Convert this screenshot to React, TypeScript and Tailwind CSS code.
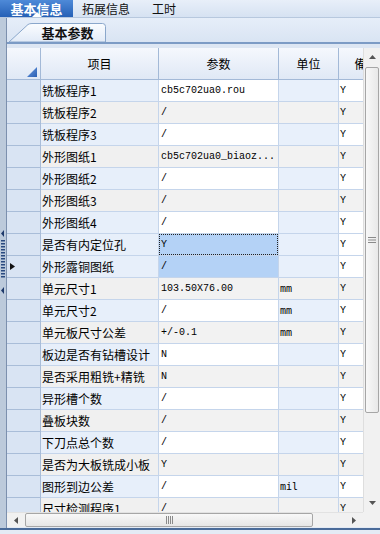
import React from "react";

type RowData = {
  name: string;
  val: string;
  unit?: string;
  sel?: boolean;
  focus?: boolean;
  marker?: boolean;
};

const rows: RowData[] = [
  { name: "铣板程序1", val: "cb5c702ua0.rou" },
  { name: "铣板程序2", val: "/" },
  { name: "铣板程序3", val: "/" },
  { name: "外形图纸1", val: "cb5c702ua0_biaoz..." },
  { name: "外形图纸2", val: "/" },
  { name: "外形图纸3", val: "/" },
  { name: "外形图纸4", val: "/" },
  { name: "是否有内定位孔", val: "Y", sel: true, focus: true },
  { name: "外形露铜图纸", val: "/", sel: true, marker: true },
  { name: "单元尺寸1", val: "103.50X76.00", unit: "mm" },
  { name: "单元尺寸2", val: "/", unit: "mm" },
  { name: "单元板尺寸公差", val: "+/-0.1", unit: "mm" },
  { name: "板边是否有钻槽设计", val: "N" },
  { name: "是否采用粗铣+精铣", val: "N" },
  { name: "异形槽个数", val: "/" },
  { name: "叠板块数", val: "/" },
  { name: "下刀点总个数", val: "/" },
  { name: "是否为大板铣成小板", val: "Y" },
  { name: "图形到边公差", val: "/", unit: "mil" },
  { name: "尺寸检测程序1", val: "/" },
];

function GridRow({ r, i }: { r: RowData; i: number }) {
  const even = i % 2 === 1;
  const nameBg = even && !r.sel ? "bg-[#f0f0f0]" : "bg-[#e7effa]";
  const valBg = r.sel ? "bg-[#b4d2f6]" : even ? "bg-[#f2f2f2]" : "bg-white";
  const unitBg = even && !r.sel ? "bg-[#f2f2f2]" : "bg-[#e8f0fb]";
  const lastBg = even && !r.sel ? "bg-[#f2f2f2]" : "bg-white";
  return (
    <div className="flex h-[22px] shrink-0">
      <div className="w-[34px] shrink-0 border-r border-b border-[#a9bdd8] bg-[#d9e4f3] flex items-center pl-[3px]">
        {r.marker && (
          <svg width="5" height="7" viewBox="0 0 5 7">
            <path d="M0 0 L5 3.5 L0 7 Z" fill="#111" />
          </svg>
        )}
      </div>
      <div
        className={`w-[118px] shrink-0 border-r border-b border-[#c5d5eb] ${nameBg} flex items-center pl-[1px] text-[12px] text-[#000] whitespace-nowrap overflow-hidden`}
      >
        {r.name}
      </div>
      <div className={`w-[120px] shrink-0 border-r border-b border-[#c5d5eb] ${valBg} flex`}>
        {r.focus ? (
          <div className="flex-1 border border-dotted border-[#222] flex items-center pl-[1px] text-[10px] text-[#000] [font-family:'Liberation_Mono',monospace] whitespace-nowrap overflow-hidden">
            {r.val}
          </div>
        ) : (
          <div className="flex-1 flex items-center pl-[2px] text-[10px] text-[#000] [font-family:'Liberation_Mono',monospace] whitespace-nowrap overflow-hidden">
            {r.val}
          </div>
        )}
      </div>
      <div
        className={`w-[60px] shrink-0 border-r border-b border-[#c5d5eb] ${unitBg} flex items-center pl-[1px] text-[10px] text-[#000] [font-family:'DejaVu_Sans_Mono',monospace]`}
      >
        {r.unit ?? ""}
      </div>
      <div
        className={`w-[56px] shrink-0 border-r border-b border-[#c5d5eb] ${lastBg} flex items-center pl-[1px] text-[10px] text-[#000] [font-family:'Liberation_Mono',monospace]`}
      >
        Y
      </div>
    </div>
  );
}

function HeaderRow() {
  return (
    <div className="flex h-[32px] shrink-0 bg-gradient-to-b from-[#f5f8fd] to-[#dfe8f5] text-[12px] text-[#000]">
      <div className="w-[34px] shrink-0 border-r border-b border-[#a3b9d7] flex items-end justify-end pr-[3px] pb-[2px]">
        <svg width="10" height="10" viewBox="0 0 10 10">
          <defs>
            <linearGradient id="tri" x1="0" y1="0" x2="1" y2="1">
              <stop offset="0" stopColor="#6b9be0" />
              <stop offset="1" stopColor="#2a5fb4" />
            </linearGradient>
          </defs>
          <path d="M10 0 L10 10 L0 10 Z" fill="url(#tri)" />
        </svg>
      </div>
      <div className="w-[118px] shrink-0 border-r border-b border-[#a3b9d7] flex items-center justify-center">
        项目
      </div>
      <div className="w-[120px] shrink-0 border-r border-b border-[#a3b9d7] flex items-center justify-center">
        参数
      </div>
      <div className="w-[60px] shrink-0 border-r border-b border-[#a3b9d7] flex items-center justify-center">
        单位
      </div>
      <div className="w-[56px] shrink-0 border-r border-b border-[#a3b9d7] flex items-center justify-center whitespace-nowrap">
        備注
      </div>
    </div>
  );
}

function VScroll() {
  return (
    <div className="w-[17px] shrink-0 flex flex-col bg-[#f1f1f1] border-l border-[#dedede]">
      <div className="h-[18px] shrink-0 flex items-center justify-center">
        <svg width="7" height="4" viewBox="0 0 7 4">
          <path d="M0 4 L3.5 0 L7 4 Z" fill="#555" />
        </svg>
      </div>
      <div className="h-[346px] shrink-0 mt-[1px] mx-[1px] rounded-[2px] border border-[#a6a6a6] bg-gradient-to-r from-[#f8f8f8] to-[#e8e8e8] flex items-center justify-center">
        <svg width="8" height="6" viewBox="0 0 8 6">
          <rect x="0" y="0" width="8" height="1" fill="#8a8a8a" />
          <rect x="0" y="2.5" width="8" height="1" fill="#8a8a8a" />
          <rect x="0" y="5" width="8" height="1" fill="#8a8a8a" />
        </svg>
      </div>
      <div className="flex-1" />
      <div className="h-[18px] shrink-0 flex items-center justify-center">
        <svg width="7" height="4" viewBox="0 0 7 4">
          <path d="M0 0 L3.5 4 L7 0 Z" fill="#555" />
        </svg>
      </div>
    </div>
  );
}

function HScroll() {
  return (
    <div className="flex h-[15px] shrink-0">
      <div className="w-[356px] shrink-0 flex bg-[#f1f1f1] border-t border-[#e2e2e2]">
        <div className="w-[18px] shrink-0 flex items-center justify-center">
          <svg width="4" height="7" viewBox="0 0 4 7">
            <path d="M4 0 L0 3.5 L4 7 Z" fill="#555" />
          </svg>
        </div>
        <div className="w-[288px] shrink-0 rounded-[2px] border border-[#a6a6a6] bg-gradient-to-b from-[#f8f8f8] to-[#e6e6e6] flex items-center justify-center">
          <svg width="7" height="8" viewBox="0 0 7 8">
            <rect x="0" y="0" width="1" height="8" fill="#8a8a8a" />
            <rect x="2" y="0" width="1" height="8" fill="#8a8a8a" />
            <rect x="4" y="0" width="1" height="8" fill="#8a8a8a" />
            <rect x="6" y="0" width="1" height="8" fill="#8a8a8a" />
          </svg>
        </div>
        <div className="flex-1" />
        <div className="w-[18px] shrink-0 flex items-center justify-center">
          <svg width="4" height="7" viewBox="0 0 4 7">
            <path d="M0 0 L4 3.5 L0 7 Z" fill="#555" />
          </svg>
        </div>
      </div>
      <div className="w-[17px] shrink-0 bg-[#f1f1f1]" />
    </div>
  );
}

function SubTab() {
  return (
    <div className="relative w-[97px] h-[19px] shrink-0">
      <svg className="absolute inset-0" width="97" height="19" viewBox="0 0 97 19">
        <defs>
          <linearGradient id="tabg" x1="0" y1="0" x2="0" y2="1">
            <stop offset="0" stopColor="#fbfdff" />
            <stop offset="1" stopColor="#e1eaf7" />
          </linearGradient>
        </defs>
        <path
          d="M0 19 L19 1.5 Q20.5 0.5 23 0.5 L93.5 0.5 Q96.5 0.5 96.5 3.5 L96.5 19 Z"
          fill="url(#tabg)"
          stroke="#8aa7cb"
          strokeWidth="1"
        />
      </svg>
      <div className="relative h-full pl-[20px] flex items-center justify-center text-[13px] font-bold text-[#111]">
        基本参数
      </div>
    </div>
  );
}

export default function App() {
  return (
    <div className="w-[380px] h-[534px] overflow-hidden bg-[#dfe7f3] flex flex-col [font-family:'Noto_Sans_CJK_SC','Noto_Sans',sans-serif] text-black">
      {/* top tabs */}
      <div className="h-[18px] shrink-0 flex items-stretch bg-gradient-to-b from-[#e8eff9] to-[#d6e2f2] border-b border-[#b7c8de]">
        <div className="relative w-[73px] shrink-0 bg-gradient-to-b from-[#4e8ad8] to-[#2560b6] flex items-center justify-center text-[13px] font-bold text-white">
          基本信息
          <svg className="absolute left-[32px] bottom-0" width="10" height="5" viewBox="0 0 10 5">
            <path d="M0 5 L5 0 L10 5 Z" fill="#ffffff" />
          </svg>
        </div>
        <div className="ml-[9px] flex items-center text-[12px] text-[#111]">拓展信息</div>
        <div className="ml-[22px] flex items-center text-[12px] text-[#111]">工时</div>
      </div>

      {/* body */}
      <div className="flex h-[510px] shrink-0">
        {/* left splitter */}
        <div className="w-[7px] shrink-0 bg-[#bccadb] border-r border-[#7c90ae] flex flex-col">
          <svg className="mt-[210px]" width="6" height="68" viewBox="0 0 6 68">
            <path d="M4 2 L1 5.5 L4 9 Z" fill="#1e3a6b" />
            {Array.from({ length: 13 }).map((_, k) => (
              <rect key={k} x="1" y={12 + k * 3} width="4" height="1.5" fill="#2a4a80" />
            ))}
            <path d="M4 59 L1 62.5 L4 66 Z" fill="#1e3a6b" />
          </svg>
        </div>

        {/* main */}
        <div className="w-[373px] shrink-0 flex flex-col">
          <div className="h-[26px] shrink-0 pt-[5px] pl-[2px] flex items-start bg-gradient-to-b from-[#e6eef9] to-[#d9e4f3] border-b-2 border-[#7c9bc5]">
            <SubTab />
          </div>
          <div className="h-[4px] shrink-0 bg-[#dde6f3]" />
          <div className="h-[464px] shrink-0 flex">
            <div className="w-[356px] shrink-0 overflow-hidden flex flex-col bg-white">
              <HeaderRow />
              {rows.map((r, i) => (
                <GridRow key={i} r={r} i={i} />
              ))}
            </div>
            <VScroll />
          </div>
          <HScroll />
          <div className="h-[1px] shrink-0 bg-[#e3eaf4]" />
        </div>
      </div>

      <div className="h-[2px] shrink-0 bg-[#4a6b99]" />
      <div className="flex-1 bg-[#e4ebf5]" />
    </div>
  );
}
